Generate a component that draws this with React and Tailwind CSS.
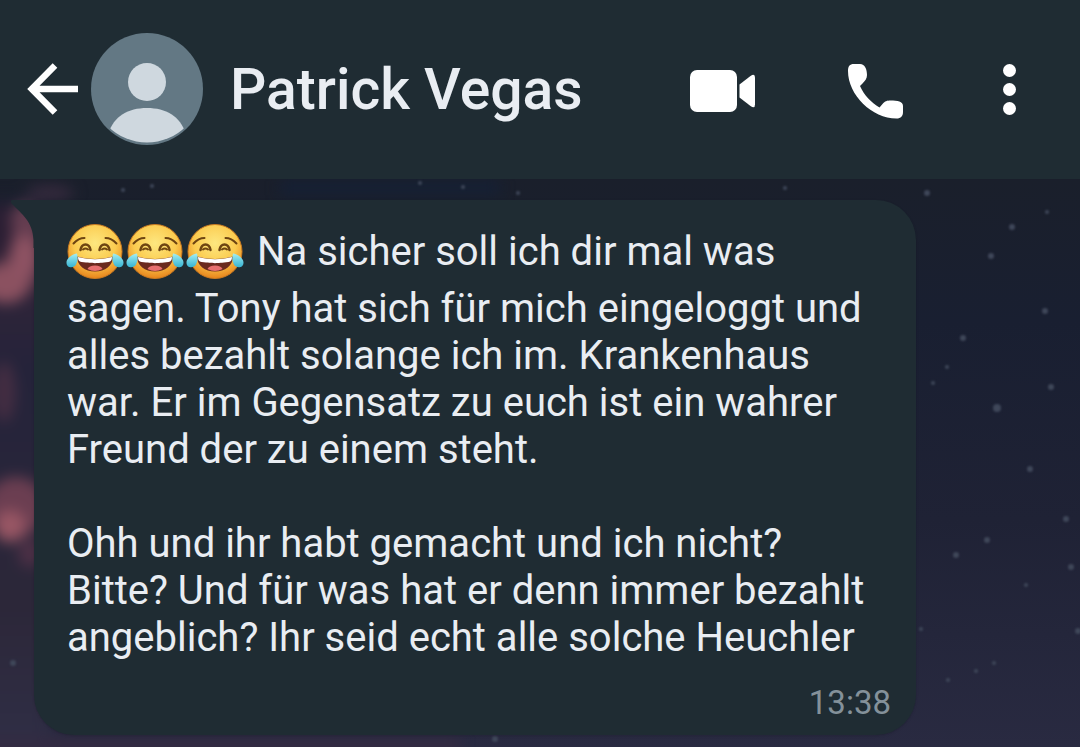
import React from "react";

const contact = "Patrick Vegas";

const message = {
  time: "13:38",
  laughs: 3,
  paragraphs: [
    "Na sicher soll ich dir mal was sagen. Tony hat sich für mich eingeloggt und alles bezahlt solange ich im. Krankenhaus war. Er im Gegensatz zu euch ist ein wahrer Freund der zu einem steht.",
    "Ohh und ihr habt gemacht und ich nicht? Bitte? Und für was hat er denn immer bezahlt angeblich? Ihr seid echt alle solche Heuchler",
  ],
};

// x, y, radius
const stars = [
  [927, 14, 3], [1047, 33, 2], [1012, 48, 3], [991, 77, 3], [1045, 132, 3], [963, 159, 3],
  [947, 188, 2], [1051, 208, 3], [997, 229, 4], [933, 204, 2], [1030, 290, 3], [1066, 340, 3],
  [987, 361, 3], [956, 376, 3], [1071, 388, 3], [1026, 406, 2], [921, 450, 2], [994, 484, 2],
  [976, 492, 2], [948, 501, 2], [420, 4, 2], [463, 8, 2], [152, 7, 2], [785, 9, 2],
  [123, 11, 2], [13, 484, 3], [495, 560, 3], [1078, 452, 3], [518, 14, 2],
];

const Wallpaper = () => (
  <svg className="absolute inset-0 w-full h-full" viewBox="0 0 1080 568" preserveAspectRatio="xMidYMin slice" aria-hidden="true">
    <defs>
      <linearGradient id="sky" x1="0" y1="0" x2="0" y2="1">
        <stop offset="0" stopColor="#1a1f2b" />
        <stop offset="0.25" stopColor="#191f31" />
        <stop offset="0.6" stopColor="#1f2235" />
        <stop offset="1" stopColor="#292a41" />
      </linearGradient>
      <linearGradient id="edge" x1="0" y1="0" x2="0" y2="1">
        <stop offset="0" stopColor="#1b1f30" />
        <stop offset="0.1" stopColor="#332438" />
        <stop offset="0.3" stopColor="#24233a" />
        <stop offset="0.7" stopColor="#2c2739" />
        <stop offset="1" stopColor="#303049" />
      </linearGradient>
      <filter id="haze" x="-50%" y="-50%" width="200%" height="200%" colorInterpolationFilters="sRGB">
        <feGaussianBlur stdDeviation="7" />
      </filter>
      <filter id="glow" x="-10%" y="-10%" width="120%" height="120%" colorInterpolationFilters="sRGB">
        <feGaussianBlur stdDeviation="1" />
      </filter>
    </defs>
    <rect width="1080" height="568" fill="url(#sky)" />
    <g filter="url(#haze)">
      <rect x="-40" y="18" width="90" height="590" fill="url(#edge)" />
      <ellipse cx="24" cy="68" rx="20" ry="44" fill="#653d50" />
      <ellipse cx="6" cy="104" rx="24" ry="20" fill="#8b5160" />
      <ellipse cx="24" cy="78" rx="12" ry="22" fill="#8f5363" />
      <ellipse cx="-2" cy="52" rx="14" ry="28" fill="#2a1e33" />
      <ellipse cx="4" cy="213" rx="12" ry="30" fill="#432d42" />
      <ellipse cx="16" cy="328" rx="30" ry="30" fill="#6b3e51" />
      <ellipse cx="10" cy="347" rx="16" ry="16" fill="#985664" />
      <ellipse cx="30" cy="374" rx="12" ry="14" fill="#4d3046" />
      <ellipse cx="50" cy="14" rx="24" ry="8" fill="#352a3d" />
      <rect x="280" y="2" width="220" height="14" fill="#152035" />
      <rect x="-20" y="558" width="480" height="20" fill="#332b42" />
    </g>
    <g fill="#3f475a" filter="url(#glow)">
      {stars.map(([x, y, r]) => (
        <circle key={`${x}-${y}`} cx={x} cy={y} r={r} />
      ))}
    </g>
  </svg>
);

const BackIcon = () => (
  <svg className="w-[52px] h-[52px]" viewBox="0 0 52 52" fill="none" stroke="#fff" strokeWidth="6.5" aria-hidden="true">
    <path d="M28 2.5 4.8 26 28 49.5M5 26h46" />
  </svg>
);

const Avatar = () => (
  <svg className="w-28 h-28 shrink-0" viewBox="0 0 112 112" aria-hidden="true">
    <defs>
      <clipPath id="disc">
        <circle cx="56" cy="54.5" r="55" />
      </clipPath>
    </defs>
    <circle cx="56" cy="56" r="56" fill="#637884" />
    <circle cx="56" cy="49" r="19" fill="#cfd8df" />
    <path clipPath="url(#disc)" d="M17 101C23 83 37 75 56 75s33 8 39 26v11H17z" fill="#cfd8df" />
  </svg>
);

const VideoIcon = () => (
  <svg className="w-[66px] h-14" viewBox="0 0 66 56" fill="#fff" aria-hidden="true">
    <rect x="0" y="9" width="47" height="42" rx="7" />
    <path d="M49.5 23.5 60.5 15q4.500-3 4.500 1.500v27q0 4.500-4.500 1.500l-11-8.500z" />
  </svg>
);

const PhoneIcon = () => (
  <svg className="w-14 h-14 overflow-visible" viewBox="0 0 56 56" fill="#fff" aria-hidden="true">
    <path d="M5 3h6c5 0 7 5.500 7 11 0 3.500-2 6-4.500 8.500l-2.500 2.500C15 34 22 41.500 30.500 46.500l3-3.500c2.500-3 4.500-3.500 8-3.500 7 0 12.500 1 12.500 5.500V51c0 4-2 6.500-6.500 6.500C23 57.500-1 34-1 10-1 5.500.5 3 5 3z" />
  </svg>
);

const MenuIcon = () => (
  <svg className="w-[22px] h-14" viewBox="0 0 22 56" fill="#fff" aria-hidden="true">
    <circle cx="11.5" cy="9.5" r="6.5" />
    <circle cx="11.5" cy="28.5" r="6.5" />
    <circle cx="11.5" cy="47.5" r="6.5" />
  </svg>
);

const JoyEmoji = () => (
  <svg className="w-[60px] h-14 overflow-visible" viewBox="1 -1 60 56" aria-hidden="true">
    <defs>
      <radialGradient id="face" cx="0.5" cy="0.35" r="0.65">
        <stop offset="0" stopColor="#fde780" />
        <stop offset="0.6" stopColor="#fbcb4f" />
        <stop offset="1" stopColor="#e8851c" />
      </radialGradient>
      <linearGradient id="tear" x1="0" y1="0" x2="0" y2="1">
        <stop offset="0" stopColor="#a5eef2" />
        <stop offset="1" stopColor="#35b3d2" />
      </linearGradient>
    </defs>
    <circle cx="29" cy="27.5" r="27" fill="url(#face)" stroke="#c97a20" strokeWidth="1" />
    <g fill="none" stroke="#6d4412" strokeLinecap="round">
      <path d="M7.500 19.500q5-5.500 11-5.500M50.500 19.500q-5-5.500-11-5.500" strokeWidth="2" />
      <path d="M14.500 26q1-5.500 5-5.500t5 5.500M33.500 26q1-5.500 5-5.500t5 5.500" strokeWidth="2.500" />
      <path d="M17 25.500q2.500-2 5 0M36 25.500q2.500-2 5 0" strokeWidth="2" />
    </g>
    <path d="M11 32.500q18 5 36 0c0 9-8 15-18 15s-18-6-18-15z" fill="#6b2a1e" />
    <path d="M12 33q17 4.500 34 0c0 3-1 4.500-3.500 5-13.500 1.500-13.500 1.500-27 0C13 37.500 12 36 12 33z" fill="#fff" />
    <path d="M21.500 45q1.500-3.500 7.500-3.500t7.500 3.500q-7.500 4-15 0z" fill="#e8706f" />
    <path d="M11 29.500C7 30 .5 34 .5 38.500c0 6 7.500 6 9.500 2s2-6 1-11zM47 29.500c4 .5 10.500 4.500 10.500 9 0 6-7.500 6-9.500 2s-2-6-1-11z" fill="url(#tear)" />
  </svg>
);

const Header = () => (
  <header className="flex items-center bg-[#1f2c33] pt-[33px] pb-[34px] pl-[27px] pr-[60px]">
    <button type="button" aria-label="Zurück" className="shrink-0">
      <BackIcon />
    </button>
    <div className="flex flex-1 items-center gap-[27px] pl-3 min-w-0">
      <Avatar />
      <h1 className="text-[57px] leading-[72px] pt-0.5 font-medium text-[#e9edf2] truncate">{contact}</h1>
    </div>
    <nav className="flex items-center gap-[93px] shrink-0">
      <button type="button" aria-label="Videoanruf"><VideoIcon /></button>
      <button type="button" aria-label="Anruf"><PhoneIcon /></button>
      <button type="button" aria-label="Menü"><MenuIcon /></button>
    </nav>
  </header>
);

const Bubble = ({ laughs, paragraphs, time }) => (
  <article className="relative bg-[#1f2c33] rounded-[40px] rounded-tl-none ml-[34px] mr-[164px] px-[33px] pt-[23px] pb-3 shadow-sm">
    {/* tail */}
    <svg className="absolute top-0 right-full w-6 h-12" viewBox="0 0 24 48" fill="#1f2c33" aria-hidden="true">
      <path d="M25 0H3Q-1 0 2 4C12 14 23 22 23.500 40V48H25z" />
    </svg>
    <div className="space-y-[47px] text-[40px] leading-[47px] text-[#e9edf2]">
      {paragraphs.map((text, i) => (
        <p key={i}>
          {i === 0 && (
            <>
              <span role="img" aria-label="Tränen lachend" className="inline-flex items-start h-[62px] align-[-14px]">
                {Array.from({ length: laughs }, (_, n) => <JoyEmoji key={n} />)}
              </span>{" "}
            </>
          )}
          {text}
        </p>
      ))}
    </div>
    <div className="flex justify-end -mr-2 pt-[22px]">
      <time className="text-[33px] leading-10 text-[#84919a]">{time}</time>
    </div>
  </article>
);

const App = () => (
  <div className="flex flex-col min-h-screen bg-[#292a41] font-[Roboto,sans-serif]">
    <Header />
    <main className="relative flex-1 overflow-hidden pt-[21px] pb-[11px]">
      <Wallpaper />
      <Bubble {...message} />
    </main>
  </div>
);

export default App;
